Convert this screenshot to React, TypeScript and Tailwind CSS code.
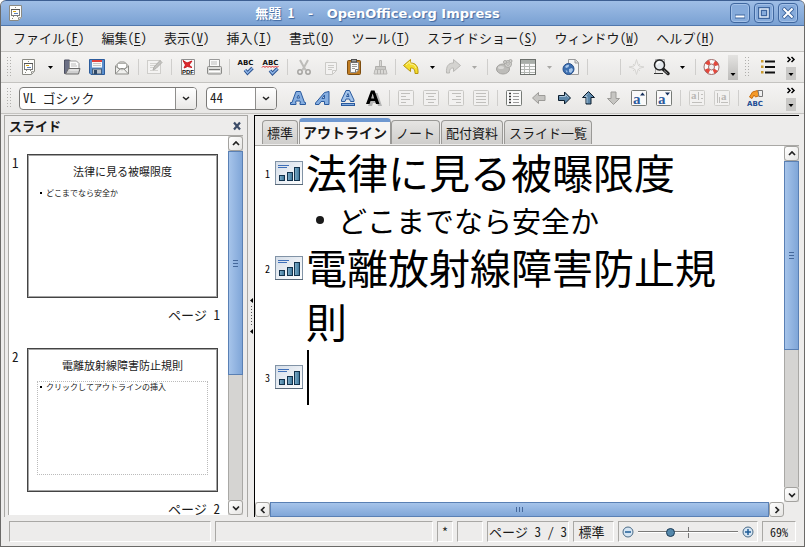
import type { ReactNode } from 'react';

const ui = `font-['Noto_Sans_Mono_CJK_JP','Noto_Sans_CJK_JP',sans-serif]`;

/* ---------- icons ---------- */

function Icon({ children }: { children: ReactNode }) {
    return (
        <svg width="25" height="24" viewBox="0 0 25 24" fill="none" className="block">
            {children}
        </svg>
    );
}

const icons = {
    impress: (
        <Icon>
            <path d="M5.500 4.500h12v12l-3 3h-9z" fill="#fdfdfb" stroke="#8a8a84" />
            <path d="M14.500 19v-2.500h3" stroke="#aaaaa4" fill="#ddd" />
            <path d="M11 6.500h1M9 15.500h1M13 15.500h1M8 17.500h1M14 17.500h1" stroke="#8a8a84" />
            <rect x="7.500" y="8.500" width="8" height="6" fill="#fff" stroke="#7c7c7c" />
            <path d="M7 8.500h9" stroke="#555" />
            <path d="M9 10.500h3" stroke="#d8a818" />
            <path d="M10 12.500h4" stroke="#5b80b8" />
        </Icon>
    ),
    open: (
        <Icon>
            <path d="M5.500 18.500v-13.500h5l1.500 2h2v11.500z" fill="#6c7085" stroke="#4c4f60" />
            <path d="M10.500 14v-8h7l2.500 2.500v6z" fill="#fafafa" stroke="#999" />
            <path d="M12 9h5M12 11h6" stroke="#bbb" />
            <path d="M9.500 13.500h11.500l-1.500 5.500h-13z" fill="#cfcfcf" stroke="#6a6a6a" />
            <path d="M10.500 15h9" stroke="#f3f3f3" />
        </Icon>
    ),
    save: (
        <Icon>
            <path d="M5.500 4.500h15v15h-13.500l-1.500-1.500z" fill="#5b8fce" stroke="#2c5c9c" />
            <rect x="8" y="5" width="10" height="7.500" fill="#f7f7f7" />
            <rect x="8" y="5" width="10" height="2" fill="#e0403c" />
            <path d="M9 8.500h8M9 10.500h8" stroke="#c5c5c5" />
            <rect x="8.500" y="14" width="9" height="5" fill="#bcc3cb" stroke="#44607f" />
            <rect x="10" y="15" width="3" height="4" fill="#2f4866" />
        </Icon>
    ),
    mail: (
        <Icon>
            <path d="M6.500 11l4-4h5l4 4v8h-13z" fill="#f0f0ee" stroke="#8d8d89" />
            <path d="M8.500 12.500v-4h9v4l-4.500 2.500z" fill="#fff" stroke="#b0b0ac" />
            <path d="M7 18.500l4.500-5h3l4.500 5M7 11.500l4 3M19 11.500l-4 3" stroke="#8d8d89" />
        </Icon>
    ),
    edit: (
        <Icon>
            <rect x="5.500" y="5.500" width="13" height="13" fill="#f4f3f2" stroke="#cfcecb" />
            <path d="M8 8.500h8M8 10.500h6M8 12.500h4M8 15.500h8" stroke="#d5d4d1" />
            <path d="M11 15l1-3 6-6.500 2 2-6 6z" fill="#c4c3c0" stroke="#b0afac" />
        </Icon>
    ),
    pdf: (
        <Icon>
            <path d="M6.500 4.500h13v15h-13z" fill="#fafafa" stroke="#8f8f8f" />
            <path d="M8 5.500l4 2.500 5-2-3 4 3 2.500-4.500-1-3.500 1.500 1.500-3z" fill="#e0282c" stroke="#c81c22" />
            <text x="7" y="18.500" fontSize="6" fontWeight="bold" fontFamily="Liberation Sans" fill="#111">PDF</text>
        </Icon>
    ),
    print: (
        <Icon>
            <path d="M9.500 12v-7.500h10v7.500" fill="#fafafa" stroke="#9a9a9a" />
            <path d="M11 7h6M11 9h6" stroke="#bbb" />
            <rect x="7.500" y="11.500" width="14" height="7.500" rx="1" fill="#dcdcda" stroke="#8a8a88" />
            <path d="M9 14.500h11" stroke="#777" />
            <path d="M9 16.500h11" stroke="#fff" />
        </Icon>
    ),
    spell: (
        <Icon>
            <text x="4.500" y="10" fontSize="7" fontWeight="bold" fontFamily="DejaVu Sans" fill="#111">ABC</text>
            <path d="M12 15l2.500 3 5-5" stroke="#2b5290" strokeWidth="3.500" />
            <path d="M12 15l2.500 3 5-5" stroke="#8fb6e8" strokeWidth="1.500" />
        </Icon>
    ),
    autospell: (
        <Icon>
            <text x="4.500" y="10" fontSize="7" fontWeight="bold" fontFamily="DejaVu Sans" fill="#111">ABC</text>
            <path d="M4 12.500l1.500-1.500 1.500 1.500 1.500-1.500 1.500 1.500 1.500-1.500 1.500 1.500 1.500-1.500 1.500 1.500 1.500-1.500 1.500 1.500 1.500-1.500" stroke="#e02828" />
            <path d="M12 15.500l2.500 3 5-5" stroke="#2b5290" strokeWidth="3.500" />
            <path d="M12 15.500l2.500 3 5-5" stroke="#8fb6e8" strokeWidth="1.500" />
        </Icon>
    ),
    cut: (
        <Icon>
            <path d="M9 5l5.500 10M17 5l-5.500 10" stroke="#bdbcb9" strokeWidth="2" />
            <circle cx="9" cy="17" r="2.200" stroke="#a5a4a1" strokeWidth="1.500" />
            <circle cx="17" cy="17" r="2.200" stroke="#a5a4a1" strokeWidth="1.500" />
        </Icon>
    ),
    copy: (
        <Icon>
            <path d="M9.500 7.500h11v8l-4 4h-7z" fill="#f3f2f1" stroke="#cbcac7" />
            <path d="M12 10.500h6M12 12.500h6M12 14.500h4M16.500 19v-3.500h4" stroke="#cbcac7" />
        </Icon>
    ),
    paste: (
        <Icon>
            <rect x="6.500" y="5.500" width="13" height="14" rx="1" fill="#c07c22" stroke="#7d4d10" />
            <path d="M9.500 7.500h8v7.500l-2.500 2.500h-5.500z" fill="#fafafa" stroke="#8c8c8c" />
            <rect x="10.500" y="4.500" width="5" height="2.500" fill="#9c9c9c" stroke="#4f4f4f" />
            <path d="M11 9.500h5M11 11.500h5M11 13.500h3" stroke="#999" />
            <path d="M14.500 17.500v-3h3" stroke="#777" />
        </Icon>
    ),
    brush: (
        <Icon>
            <path d="M13.500 5.500h2v6h-2z" fill="#d9d8d5" stroke="#b8b7b4" />
            <path d="M9.500 11.500h10v3h-10z" fill="#c9c8c5" stroke="#b0afac" />
            <path d="M9 14.500h11l1 4.500h-13z" fill="#d9d8d5" stroke="#b8b7b4" />
            <path d="M11.500 15v4M14.500 15v4M17.500 15v4" stroke="#b3b2af" />
        </Icon>
    ),
    undo: (
        <Icon>
            <path d="M4.500 10.500l7-6v3.500c5 0 8 3 7.500 10.500h-3c0-4-1-5.500-4.500-5.500v3.500z" fill="#f4dc2c" stroke="#b8960c" strokeLinejoin="round" />
            <path d="M7 10l4-3.500v2.500c3 0 5 1 6 4" stroke="#fbf29a" />
        </Icon>
    ),
    redo: (
        <Icon>
            <path d="M19.500 10.500l-7-6v3.500c-5 0-7.500 3-7 10h3c0-4 1-5 4-5v3.500z" fill="#d4d3d0" stroke="#b9b8b5" strokeLinejoin="round" />
        </Icon>
    ),
    chart: (
        <Icon>
            <ellipse cx="12" cy="14" rx="6.500" ry="5" fill="#bdbcb9" stroke="#a3a29f" />
            <ellipse cx="10" cy="12.500" rx="3" ry="1.500" fill="#d9d8d6" />
            <circle cx="17" cy="9" r="3.500" fill="#d3d2cf" stroke="#a9a8a5" />
            <circle cx="17" cy="9" r="1.300" fill="#efeeed" stroke="#a9a8a5" />
            <circle cx="14" cy="7" r="1.500" fill="#d3d2cf" stroke="#a9a8a5" />
            <circle cx="19.500" cy="6" r="1.500" fill="#d3d2cf" stroke="#a9a8a5" />
        </Icon>
    ),
    table: (
        <Icon>
            <rect x="4.500" y="4.500" width="15" height="15" fill="#fafafa" stroke="#6b6f6b" />
            <rect x="5" y="5" width="14" height="3" fill="#a9aea9" />
            <path d="M5 8.500h14M5 11.500h14M5 14.500h14M5 17.500h14M8.500 8v11M13.500 8v11" stroke="#b2b6b2" />
        </Icon>
    ),
    link: (
        <Icon>
            <path d="M10.500 4.500h7l3 3v12h-10z" fill="#f4f4f4" stroke="#9a9a9a" />
            <path d="M17 4.500v3.500h3.500" stroke="#9a9a9a" fill="#ddd" />
            <circle cx="10.500" cy="14" r="5.500" fill="#3d6fb0" stroke="#28508c" />
            <path d="M7 12c1-2 3-2.500 4-2l-.5 2-2 1zM11 14l3-1 1 2-2 3-2-1zM7.500 15l2 1-.5 2z" fill="#a9c7ea" />
        </Icon>
    ),
    navigator: (
        <Icon>
            <path d="M12.500 4.500l1.500 5 1 1.500 5 1-5 1.500-1 1-1.500 5-1.500-5-1-1-5-1.500 5-1 1-1.500z" fill="#f1f0ef" stroke="#d6d5d2" />
            <path d="M9 9l2 2M16 9l-2 2M9 16l2-2M16 16l-2-2" stroke="#d6d5d2" />
        </Icon>
    ),
    zoom: (
        <Icon>
            <path d="M6.500 18.500v-14h9v4" stroke="#aaa" />
            <path d="M5 18.500h9" stroke="#333" />
            <path d="M14 14l5 4.500" stroke="#222" strokeWidth="3.500" strokeLinecap="round" />
            <path d="M15 15.500l3.500 3" stroke="#999" />
            <circle cx="10.500" cy="10" r="5" fill="#e4e8ec" stroke="#222" strokeWidth="1.500" />
            <path d="M8 9.500a3 3 0 0 1 3-2.500" stroke="#fff" strokeWidth="1.500" />
        </Icon>
    ),
    help: (
        <Icon>
            <circle cx="12.500" cy="12" r="5.300" stroke="#fafafa" strokeWidth="4.500" />
            <circle cx="12.500" cy="12" r="5.300" stroke="#e5483c" strokeWidth="4.500" strokeDasharray="4.160 4.160" strokeDashoffset="2.080" transform="rotate(45 12.500 12)" />
            <circle cx="12.500" cy="12" r="7.500" stroke="#a06a68" />
            <circle cx="12.500" cy="12" r="3" fill="#f1f0ef" stroke="#a06a68" />
        </Icon>
    ),
    bullets: (
        <Icon>
            <path d="M9 6.500h10M9 12h10M9 17.500h10" stroke="#111" strokeWidth="2" />
            <path d="M5 5h2.500v2.500H5zM5 10.500h2.500v2.500H5zM5 16h2.500v2.500H5z" fill="#c99a2e" />
        </Icon>
    ),
    bold: (
        <Icon>
            <path d="M5.500 18.500v-2h1.500l4-11h4.500l4 11h1v2h-5.500v-2h.5l-.5-1.500h-4l-.5 1.500h.5v2zM12 12h2.500l-1-3z" fill="#86aee0" stroke="#2a5a9e" fillRule="evenodd" />
        </Icon>
    ),
    italic: (
        <Icon>
            <path d="M5.500 18.500v-1.500l9-10.500 4.500-1v13h-4.500v-3h-3.500l-2 3zM12 12.500h2.500v-3.500z" fill="#86aee0" stroke="#2a5a9e" fillRule="evenodd" />
        </Icon>
    ),
    underline: (
        <Icon>
            <path d="M6.500 15.500v-1.500l4.500-9.500h3.500l4.500 9.500v1.500h-3.500l-1-2.500h-3.500l-1 2.500zM11.500 10.500h2.500l-1-3z" fill="#a3c3ea" stroke="#2a5a9e" fillRule="evenodd" />
            <rect x="6.500" y="17.500" width="13" height="2" fill="#86aee0" stroke="#2a5a9e" />
        </Icon>
    ),
    shadow: (
        <Icon>
            <path d="M8 20l5.500-13h4l4.500 13h-4l-1-3h-4l-1 3z" fill="#b5b5b5" />
            <path d="M6 18l5-13.500h3.500l5 13.500h-3.500l-1-3h-4.500l-1 3zM11.200 12.500h3l-1.500-5z" fill="#000" fillRule="evenodd" />
        </Icon>
    ),
    alignLeft: (
        <Icon>
            <rect x="5.500" y="4.500" width="15" height="15" rx="1" fill="#f2f1f0" stroke="#c9c8c5" />
            <path d="M8 7.500h9M8 10.500h5M8 13.500h9M8 16.500h5" stroke="#c0bfbc" />
        </Icon>
    ),
    alignCenter: (
        <Icon>
            <rect x="5.500" y="4.500" width="15" height="15" rx="1" fill="#f2f1f0" stroke="#c9c8c5" />
            <path d="M8 7.500h10M10 10.500h6M8 13.500h10M10 16.500h6" stroke="#c0bfbc" />
        </Icon>
    ),
    alignRight: (
        <Icon>
            <rect x="5.500" y="4.500" width="15" height="15" rx="1" fill="#f2f1f0" stroke="#c9c8c5" />
            <path d="M9 7.500h9M13 10.500h5M9 13.500h9M13 16.500h5" stroke="#c0bfbc" />
        </Icon>
    ),
    justify: (
        <Icon>
            <rect x="5.500" y="4.500" width="15" height="15" rx="1" fill="#f2f1f0" stroke="#c9c8c5" />
            <path d="M8 7.500h10M8 10.500h10M8 13.500h10M8 16.500h10" stroke="#c0bfbc" />
        </Icon>
    ),
    list: (
        <Icon>
            <rect x="5.500" y="4.500" width="15" height="15" rx="1" fill="#fafafa" stroke="#777b77" />
            <path d="M8 7.500h2M8 10.500h2M8 13.500h2M8 16.500h2" stroke="#333" strokeWidth="1.500" />
            <path d="M12 7.500h6M12 10.500h6M12 13.500h6M12 16.500h6" stroke="#9a9a9a" />
        </Icon>
    ),
    left: (
        <Icon>
            <path d="M6.500 12l6-5.500v3h6.500v5h-6.500v3z" fill="#c6c5c2" stroke="#9c9b98" />
        </Icon>
    ),
    right: (
        <Icon>
            <path d="M19.500 12l-6-6v3.500h-6v5h6v3.500z" fill="#5c86a8" stroke="#0d1e2e" />
            <path d="M8.500 10.500h6v-2l3 3" stroke="#a8c4da" />
        </Icon>
    ),
    up: (
        <Icon>
            <path d="M12.500 5.500l6 6h-3.500v6.500h-5v-6.500h-3.500z" fill="#5c86a8" stroke="#0d1e2e" />
            <path d="M11 17v-6.500h-2l3-3" stroke="#a8c4da" />
        </Icon>
    ),
    down: (
        <Icon>
            <path d="M12.500 18.500l6-6h-3.500v-6.500h-5v6.500h-3.500z" fill="#c6c5c2" stroke="#9c9b98" />
        </Icon>
    ),
    grow: (
        <Icon>
            <rect x="5.500" y="4.500" width="15" height="15" rx="1" fill="#fafafa" stroke="#777b77" />
            <text x="7" y="17.500" fontSize="15" fontWeight="bold" fontFamily="Liberation Serif" fill="#2c5a9e">a</text>
            <path d="M14 9.500l2.500-3 2.500 3z" fill="#16305c" />
        </Icon>
    ),
    shrink: (
        <Icon>
            <rect x="5.500" y="4.500" width="15" height="15" rx="1" fill="#fafafa" stroke="#777b77" />
            <text x="7" y="17.500" fontSize="15" fontWeight="bold" fontFamily="Liberation Serif" fill="#2c5a9e">a</text>
            <path d="M14 6.500l2.500 3 2.500-3z" fill="#16305c" />
        </Icon>
    ),
    spacingUp: (
        <Icon>
            <rect x="5.500" y="4.500" width="15" height="15" rx="1" fill="#f2f1f0" stroke="#cfcecb" />
            <text x="7" y="13" fontSize="11" fontWeight="bold" fontFamily="Liberation Serif" fill="#b9b8b5">a</text>
            <path d="M14.500 6v8M8 16.500h10M17 8.500h2M17 12.500h2" stroke="#c0bfbc" />
        </Icon>
    ),
    spacingDown: (
        <Icon>
            <rect x="5.500" y="4.500" width="15" height="15" rx="1" fill="#f2f1f0" stroke="#cfcecb" />
            <text x="12" y="14" fontSize="11" fontWeight="bold" fontFamily="Liberation Serif" fill="#b9b8b5">a</text>
            <path d="M8.500 7v10M10.500 11v6M12 16.500h7" stroke="#c0bfbc" />
        </Icon>
    ),
    character: (
        <Icon>
            <path d="M7.500 11l3-5 5-1.500 2 5-4 1.500-1.500-2-2 3.500z" fill="#f59a28" stroke="#c96c0c" />
            <path d="M16 4.500h4.500v6h-3.500z" fill="#f0f0f0" stroke="#777" />
            <text x="5" y="19.500" fontSize="7" fontWeight="bold" fontFamily="DejaVu Sans" fill="#224c94">ABC</text>
        </Icon>
    ),
};

type IconName = keyof typeof icons;
// '|' separator, 'v' active dropdown arrow, 'x' disabled dropdown arrow, '_' empty slot
type Item = IconName | '|' | 'v' | 'x' | '_';

const standardBar: Item[] = [
    'impress', 'v', 'open', 'save', 'mail', '|', 'edit', '|', 'pdf', 'print', '|', 'spell', 'autospell', '|',
    'cut', 'copy', 'paste', 'brush', '|', 'undo', 'v', 'redo', 'x', '|', 'chart', 'table', 'x', 'link', '|',
    '_', '|', 'navigator', 'zoom', 'v', '|', 'help',
];

const formatBar: Item[] = [
    'bold', 'italic', 'underline', 'shadow', '|', 'alignLeft', 'alignCenter', 'alignRight', 'justify', '|',
    'list', 'left', 'right', 'up', 'down', 'grow', 'shrink', '|', 'spacingUp', 'spacingDown', '|', 'character',
];

/* ---------- toolbar parts ---------- */

function Grip() {
    return (
        <svg width="6" height="20" className="shrink-0">
            {[1, 4, 7, 10, 13, 16, 19].map((y) => (
                <path key={y} d={`M1 ${y - 0.5}h1M4 ${y - 0.5}h1`} stroke="#b0afac" />
            ))}
        </svg>
    );
}

function Items({ items }: { items: Item[] }) {
    return (
        <>
            {items.map((item, i) => {
                if (item === '|') {
                    return (
                        <span key={i} className="flex w-2 shrink-0 justify-center">
                            <span className="h-4 w-px bg-[#cfcecc]" />
                        </span>
                    );
                }
                if (item === '_') {
                    return <span key={i} className="w-[25px] shrink-0" />;
                }
                if (item === 'v' || item === 'x') {
                    return (
                        <button key={i} aria-label="more" className="flex w-[17px] shrink-0 justify-center">
                            <svg width="5" height="3"><path d="M0 0h5L2.500 3z" fill={item === 'v' ? '#000' : '#a9a8a5'} /></svg>
                        </button>
                    );
                }
                return (
                    <button key={i} aria-label={item} className="shrink-0">
                        {icons[item]}
                    </button>
                );
            })}
        </>
    );
}

function Overflow({ chevrons = true }: { chevrons?: boolean }) {
    return (
        <button aria-label="overflow" className={`w-[10px] shrink-0 ${chevrons ? '' : 'bg-linear-to-b from-[#e4e3e1] to-[#bdbcba]'}`}>
            <svg width="10" height="25" className="block">
                {chevrons && <path d="M0 12h10v13H0z" fill="#c9c8c6" />}
                {chevrons && <path d="M1.500 2l2.500 2.500-2.500 2.500M5.500 2l2.500 2.500-2.500 2.500" fill="none" stroke="#000" strokeWidth="1.500" />}
                <path d="M2.500 18h5l-2.500 3z" />
            </svg>
        </button>
    );
}

function Combo({ label, value, className }: { label: string; value: string; className: string }) {
    return (
        <div className={`relative h-[23px] shrink-0 ${className}`}>
            <select aria-label={label} className="block h-full w-full appearance-none rounded-[4px] border border-[#7b7a78] bg-white pb-0.5 pl-[3px] text-[13px] leading-5 text-[#222]">
                <option>{value}</option>
            </select>
            <span className="pointer-events-none absolute inset-y-px right-px flex w-[21px] items-center justify-center rounded-r-[3px] border-l border-[#8f8e8c] bg-linear-to-b from-white to-[#e9e8e6]">
                <svg width="8" height="5"><path d="M1 1l3 2.500 3-2.500" fill="none" stroke="#222" strokeWidth="1.500" /></svg>
            </span>
        </div>
    );
}

/* ---------- scrollbars ---------- */

function Stepper({ dir }: { dir: 'up' | 'down' | 'left' | 'right' }) {
    const d = {
        up: 'M2 6l3-3 3 3',
        down: 'M2 3.500l3 3 3-3',
        left: 'M6.500 2l-3 3 3 3',
        right: 'M3.500 2l3 3-3 3',
    }[dir];
    return (
        <button aria-label={dir} className="flex size-[15px] shrink-0 items-center justify-center rounded-[3px] border border-[#a3a29f] bg-linear-to-br from-white to-[#e6e5e3]">
            <svg width="10" height="10"><path d={d} fill="none" stroke="#222" strokeWidth="1.700" /></svg>
        </button>
    );
}

function VScroll({ thumb, rest }: { thumb: string; rest: string }) {
    return (
        <div className="flex w-[15px] shrink-0 flex-col bg-[#d5d4d2]">
            <Stepper dir="up" />
            <div className={`flex basis-0 items-center justify-center border border-[#5a80b4] bg-linear-to-r from-[#a6c4ea] to-[#80a6d8] ${thumb}`}>
                <svg width="5" height="7"><path d="M0 .5h5M0 3.500h5M0 6.500h5" stroke="#45689b" /></svg>
            </div>
            <div className={`basis-0 border-x border-[#a9a8a5] ${rest}`} />
            <Stepper dir="down" />
        </div>
    );
}

function HScroll() {
    return (
        <div className="flex h-[15px] shrink-0 bg-[#edeceb] pr-[15px]">
            <Stepper dir="left" />
            <div className="flex flex-1 items-center justify-center border border-[#5a80b4] bg-linear-to-b from-[#a6c4ea] to-[#80a6d8]">
                <svg width="7" height="5"><path d="M.5 0v5M3.500 0v5M6.500 0v5" stroke="#45689b" /></svg>
            </div>
            <Stepper dir="right" />
        </div>
    );
}

/* ---------- slide panel ---------- */

interface Slide {
    title: string;
    body: string;
    placeholder?: boolean;
}

const slides: Slide[] = [
    { title: '法律に見る被曝限度', body: 'どこまでなら安全か' },
    { title: '電離放射線障害防止規則', body: 'クリックしてアウトラインの挿入', placeholder: true },
];

function Thumbnail({ slide, n }: { slide: Slide; n: number }) {
    return (
        <li className="mb-[27px] flex last:mb-0">
            <span className="w-[15px] shrink-0 text-[13px] leading-[18px]">{n}</span>
            <div className="flex-1">
                <div className="flex h-36 flex-col border border-[#444] bg-white px-[9px] pt-2 pb-4 shadow-[inset_0_0_0_1px_#a5a5a5]">
                    <h3 className="text-center text-[11px] leading-4 whitespace-nowrap">{slide.title}</h3>
                    <div className={`mt-2 flex-1 border pl-0.5 text-[8px] leading-[10px] whitespace-nowrap ${slide.placeholder ? 'border-dotted border-[#bbb]' : 'border-transparent'}`}>
                        <div className="flex items-center gap-1">
                            <span className="size-0.5 bg-black" />
                            {slide.body}
                        </div>
                    </div>
                </div>
                <p className="-mr-0.5 mt-[10px] text-right text-[13px] leading-[13px]">ページ {n}</p>
            </div>
        </li>
    );
}

function SlidePanel() {
    return (
        <aside className="flex w-[243px] shrink-0 flex-col border-t border-l border-[#a9a8a5] pr-1 pb-0.5 pl-[3px]">
            <header className="flex h-[19px] items-center justify-between px-px">
                <h2 className="text-[13px] leading-4 font-bold">スライド</h2>
                <button aria-label="close">
                    <svg width="10" height="10"><path d="M2 1.500l6 7M8 1.500l-6 7" stroke="#3c4c68" strokeWidth="2.200" /></svg>
                </button>
            </header>
            <div className="flex min-h-0 flex-1 border-t border-l border-[#a9a8a5] bg-white">
                <ol className="flex-1 pt-[18px] pr-[10px] pl-[3px]">
                    {slides.map((s, i) => (
                        <Thumbnail key={s.title} slide={s} n={i + 1} />
                    ))}
                </ol>
                <VScroll thumb="grow-[223]" rest="grow-[125]" />
            </div>
        </aside>
    );
}

/* ---------- outline ---------- */

const tabs = ['標準', 'アウトライン', 'ノート', '配付資料', 'スライド一覧'];

function SlideGlyph() {
    return (
        <svg width="28" height="25" className="block shrink-0">
            <defs>
                <linearGradient id="page" x1="0" y1="0" x2="1" y2="1">
                    <stop offset="0" stopColor="#d4dde8" />
                    <stop offset="1" stopColor="#ffffff" />
                </linearGradient>
                <linearGradient id="bar" x1="0" y1="0" x2="1" y2="0">
                    <stop offset="0" stopColor="#7fb0cc" />
                    <stop offset="1" stopColor="#3b7396" />
                </linearGradient>
            </defs>
            <rect x=".5" y=".5" width="27" height="23" fill="url(#page)" stroke="#8193a6" />
            <path d="M0 23.500h28" stroke="#586878" />
            <path d="M3 4.500h11M3 6.500h9" stroke="#3f6fb8" />
            <rect x="4.500" y="14.500" width="5" height="5" fill="url(#bar)" stroke="#12324c" />
            <rect x="12.500" y="11.500" width="5" height="8" fill="url(#bar)" stroke="#12324c" />
            <rect x="19.500" y="6.500" width="5" height="13" fill="url(#bar)" stroke="#12324c" />
        </svg>
    );
}

function OutlineRow({ n, title, children }: { n: number; title?: string; children?: ReactNode }) {
    return (
        <div className="flex">
            <div className="flex h-[54px] shrink-0 items-center pr-[3px]">
                <span className="w-[10px] text-[10px]">{n}</span>
                <SlideGlyph />
            </div>
            {title && <h1 className="-mt-0.5 mb-[3px] text-[41px] leading-[54px] break-all">{title}</h1>}
            {children}
        </div>
    );
}

function OutlineView() {
    return (
        <main className="flex min-w-0 flex-1 flex-col border-t border-l border-black">
            <div role="tablist" className="flex h-[30px] items-end border-b border-[#a9a8a5] pl-[7px] pb-px">
                {tabs.map((t) =>
                    t === 'アウトライン' ? (
                        <button key={t} role="tab" aria-selected className="h-[26px] rounded-t-[4px] border border-t-4 border-b-0 border-[#9a9996] border-t-[#6f98d0] bg-[#f6f5f4] px-[3px] pb-1 text-[14px] leading-5 font-bold whitespace-nowrap">
                            {t}
                        </button>
                    ) : (
                        <button key={t} role="tab" className="mr-px h-6 rounded-t-[4px] border border-b-0 border-[#9a9996] bg-linear-to-b from-[#e6e5e3] to-[#cfcecc] px-1 text-[13px] leading-5 whitespace-nowrap">
                            {t}
                        </button>
                    ),
                )}
            </div>
            <div className="flex min-h-0 flex-1">
                <div className="flex min-w-0 flex-1 flex-col bg-white">
                    <div className="flex-1 pr-14 pl-[10px] text-black">
                        <OutlineRow n={1} title="法律に見る被曝限度" />
                        <ul className="pb-0.5 pl-[51px]">
                            <li className="flex items-center gap-[14px] text-[29px] leading-[38px]">
                                <span className="size-2 rounded-full bg-[#1a1a1a]" />
                                どこまでなら安全か
                            </li>
                        </ul>
                        <OutlineRow n={2} title="電離放射線障害防止規則" />
                        <OutlineRow n={3}>
                            <span className="ml-px h-[55px] w-0.5 bg-black" />
                        </OutlineRow>
                    </div>
                    <HScroll />
                </div>
                <div className="-ml-[15px] flex flex-col pb-[15px]">
                    <div className="flex flex-1">
                        <VScroll thumb="grow-[188]" rest="grow-[137]" />
                    </div>
                </div>
            </div>
        </main>
    );
}

/* ---------- status bar ---------- */

function Cell({ className, children }: { className: string; children?: ReactNode }) {
    return (
        <div className={`flex h-[21px] items-center justify-center border border-[#a9a8a5] border-r-white border-b-white whitespace-pre ${className}`}>
            {children}
        </div>
    );
}

function ZoomButton({ plus }: { plus?: boolean }) {
    return (
        <button aria-label={plus ? 'zoom in' : 'zoom out'}>
            <svg width="12" height="12" className="block">
                <circle cx="6" cy="6" r="5" fill="#d5e5f3" stroke="#4a6a86" />
                <path d={plus ? 'M3 6h6M6 3v6' : 'M3 6h6'} stroke="#1f5c96" strokeWidth="1.500" />
            </svg>
        </button>
    );
}

function StatusBar() {
    return (
        <footer className="flex h-[28px] shrink-0 gap-1 pt-[3px] pr-2 pl-2 text-[13px]">
            <Cell className="w-[202px] shrink-0" />
            <Cell className="min-w-0 flex-1" />
            <Cell className="w-[16px] shrink-0">*</Cell>
            <Cell className="w-[26px] shrink-0" />
            <Cell className="w-[82px] shrink-0">ページ 3 / 3</Cell>
            <Cell className="w-[41px] shrink-0 pr-1">標準</Cell>
            <Cell className="w-[140px] shrink-0 gap-1">
                <ZoomButton />
                <span className="relative flex h-full w-[100px] items-center">
                    <span className="absolute top-[5px] left-1/2 h-[11px] w-px bg-[#777]" />
                    <input
                        type="range"
                        aria-label="zoom"
                        defaultValue={31}
                        className="relative h-0.5 w-full appearance-none border-t border-[#7b7a78] bg-white [&::-webkit-slider-thumb]:size-[9px] [&::-webkit-slider-thumb]:appearance-none [&::-webkit-slider-thumb]:rounded-full [&::-webkit-slider-thumb]:border [&::-webkit-slider-thumb]:border-[#1d3c56] [&::-webkit-slider-thumb]:bg-[#5588ab]"
                    />
                </span>
                <ZoomButton plus />
            </Cell>
            <Cell className="w-[34px] shrink-0 text-[12px]">69%</Cell>
        </footer>
    );
}

/* ---------- window ---------- */

const menus = [
    ['ファイル', 'F'], ['編集', 'E'], ['表示', 'V'], ['挿入', 'I'], ['書式', 'O'],
    ['ツール', 'T'], ['スライドショー', 'S'], ['ウィンドウ', 'W'], ['ヘルプ', 'H'],
];

function TitleBar() {
    const btn = 'flex size-5 items-center justify-center rounded-[4px] border border-[#3f679f] bg-[#86abdb] shadow-[inset_0_0_0_1px_#a3c1e8]';
    return (
        <header className="flex h-[26px] shrink-0 items-center rounded-t-[5px] border-t border-b border-t-[#3d5f92] border-b-[#5077ad] bg-linear-to-b from-[#9fbee6] to-[#7aa1d3] pr-[6px] pl-[3px]">
            {icons.impress}
            <h1 className="flex-1 pr-1 text-center text-[13px] leading-5 font-bold whitespace-pre text-white [text-shadow:1px_1px_1px_#3f679f]">
                {'無題 1  -  '}
                <span className="font-['DejaVu_Sans','Noto_Sans_CJK_JP',sans-serif]">OpenOffice.org Impress</span>
            </h1>
            <div className="flex gap-1">
                <button aria-label="minimize" className={btn}>
                    <svg width="12" height="12"><path d="M1 9.500h10" stroke="#3f679f" strokeWidth="4" /><path d="M1.500 9.500h9" stroke="#fff" strokeWidth="2" /></svg>
                </button>
                <button aria-label="maximize" className={btn}>
                    <svg width="12" height="12" fill="none"><path d="M2 2h8v8H2z" stroke="#3f679f" strokeWidth="4" /><path d="M2 2h8v8H2z" stroke="#e4eefa" strokeWidth="1.500" /></svg>
                </button>
                <button aria-label="close window" className={btn}>
                    <svg width="12" height="12" fill="none"><path d="M1 1l10 10M11 1L1 11" stroke="#3f679f" strokeWidth="4" /><path d="M1.500 1.500l9 9M10.500 1.500l-9 9" stroke="#fff" strokeWidth="2" /></svg>
                </button>
            </div>
        </header>
    );
}

export default function App() {
    return (
        <div className={`flex h-screen flex-col overflow-hidden rounded-t-[6px] border border-t-0 border-[#6b6a68] bg-[#edeceb] text-[#1a1a1a] ${ui}`}>
            <TitleBar />
            <nav className="flex h-[26px] shrink-0 items-center gap-[17px] border-b border-[#c4c3c0] pb-0.5 pl-3 text-[13px] leading-5 whitespace-nowrap">
                {menus.map(([name, key]) => (
                    <button key={name}>
                        {name}(<span className="underline underline-offset-2">{key}</span>)
                    </button>
                ))}
            </nav>

            <div className="flex h-[31px] shrink-0 items-center border-b border-[#c4c3c0] bg-linear-to-b from-[#f5f4f3] to-[#e8e7e5] pr-2 pl-[5px]">
                <Grip />
                <span className="w-[5px]" />
                <div className="flex items-center"><Items items={standardBar} /></div>
                <span className="w-1" />
                <Overflow chevrons={false} />
                <span className="w-[6px]" />
                <Grip />
                <span className="w-[6px]" />
                <div className="flex flex-1 items-center"><Items items={['bullets']} /></div>
                <Overflow />
            </div>

            <div className="flex h-[31px] shrink-0 items-center border-b border-[#c4c3c0] bg-linear-to-b from-[#f5f4f3] to-[#e8e7e5] pr-2 pl-[5px]">
                <Grip />
                <span className="w-[7px]" />
                <Combo label="font name" value="VL ゴシック" className="w-[178px]" />
                <span className="w-[9px]" />
                <Combo label="font size" value="44" className="w-[71px]" />
                <span className="w-2" />
                <div className="flex flex-1 items-center"><Items items={formatBar} /></div>
                <Overflow />
            </div>

            <div className="flex min-h-0 flex-1 pt-px pr-[5px] pb-px pl-[3px]">
                <SlidePanel />
                <div className="flex w-[7px] shrink-0 items-center justify-center border-l border-[#a9a8a5]">
                    <svg width="5" height="36">
                        <path d="M4 0v5L1 2.500zM4 31v5L1 33.500z" />
                        <path d="M2.500 8v20" stroke="#555" strokeDasharray="1 2" />
                    </svg>
                </div>
                <OutlineView />
            </div>

            <StatusBar />
        </div>
    );
}
